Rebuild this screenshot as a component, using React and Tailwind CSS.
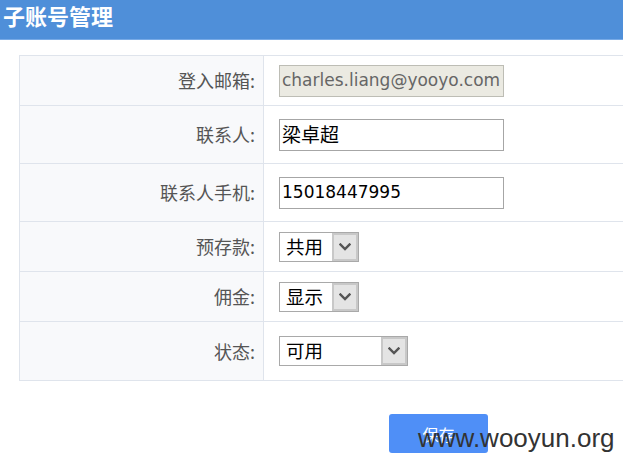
import React from 'react';

const labelCls = "bg-[#f8f9fb] border-r border-[#dfe4ec] text-right pr-[8px] text-[18px] text-[#555] font-['Noto_Sans_CJK_SC',sans-serif]";

const Chevron = () => (
    <svg width="12" height="8" viewBox="0 0 12 8" className="block">
        <path d="M1.5 1.5 L6 6 L10.5 1.5" fill="none" stroke="#555" strokeWidth="2.4" strokeLinecap="square" />
    </svg>
);

const Select = ({ value, width }) => (
    <div className={`flex h-[30px] border border-[#a9a9a9] bg-white ${width}`}>
        <div className="flex-1 flex items-center pl-[6px] text-[18.5px] text-black font-['Noto_Sans_CJK_SC',sans-serif]">{value}</div>
        <div className="w-[26px] h-full flex items-center justify-center bg-[#e4e4e4] border-[2px] border-[#c8c8c8]">
            <Chevron />
        </div>
    </div>
);

const Input = ({ value, disabled, cjk }) => (
    <div className={`w-[225px] h-[32px] flex items-center pl-[2px] border border-[#a6a6a6] ${cjk ? "text-[19px] font-['Noto_Sans_CJK_SC',sans-serif]" : "text-[17px] font-['DejaVu_Sans',sans-serif]"} ${disabled ? 'bg-[#ebeae2] text-[#666] border-[#bdbdb5]' : 'bg-white text-black'}`}>
        {value}
    </div>
);

const Row = ({ label, h, children, last }) => (
    <div className={`grid grid-cols-[244px_1fr] ${h} ${last ? '' : 'border-b border-[#dfe4ec]'}`}>
        <div className={`${labelCls} flex items-center justify-end`}>{label}:</div>
        <div className="flex items-center pl-[15px]">{children}</div>
    </div>
);

export default function App() {
    return (
        <div className="w-[623px] h-[466px] overflow-hidden bg-white relative">
            <div className="h-[40px] bg-[#4f8fd9] border-b border-[#78aae6] pl-[3px]">
                <h1 className="text-[22px] leading-[30px] font-bold text-white font-['Noto_Sans_CJK_SC',sans-serif]">子账号管理</h1>
            </div>

            <div className="mt-[15px] ml-[19px] w-[760px] border-[1.5px] border-[#dfe4ec]">
                <Row label="登入邮箱" h="h-[50px]">
                    <Input value="charles.liang@yooyo.com" disabled />
                </Row>
                <Row label="联系人" h="h-[58px]">
                    <Input value="梁卓超" cjk />
                </Row>
                <Row label="联系人手机" h="h-[58px]">
                    <Input value="15018447995" />
                </Row>
                <Row label="预存款" h="h-[50px]">
                    <Select value="共用" width="w-[80px]" />
                </Row>
                <Row label="佣金" h="h-[50px]">
                    <Select value="显示" width="w-[80px]" />
                </Row>
                <Row label="状态" h="h-[58px]" last>
                    <Select value="可用" width="w-[129px]" />
                </Row>
            </div>

            <div className="mt-[33px] pl-[389px] relative">
                <button className="w-[99px] h-[39px] rounded-[3px] bg-[#4f8ff7] text-white text-[16px] font-['Noto_Sans_CJK_SC',sans-serif]">保存</button>
                <span className="absolute left-[418px] top-[5px] text-[26px] text-[#333] font-['Liberation_Sans',sans-serif] pointer-events-none">www.wooyun.org</span>
            </div>
        </div>
    );
}
